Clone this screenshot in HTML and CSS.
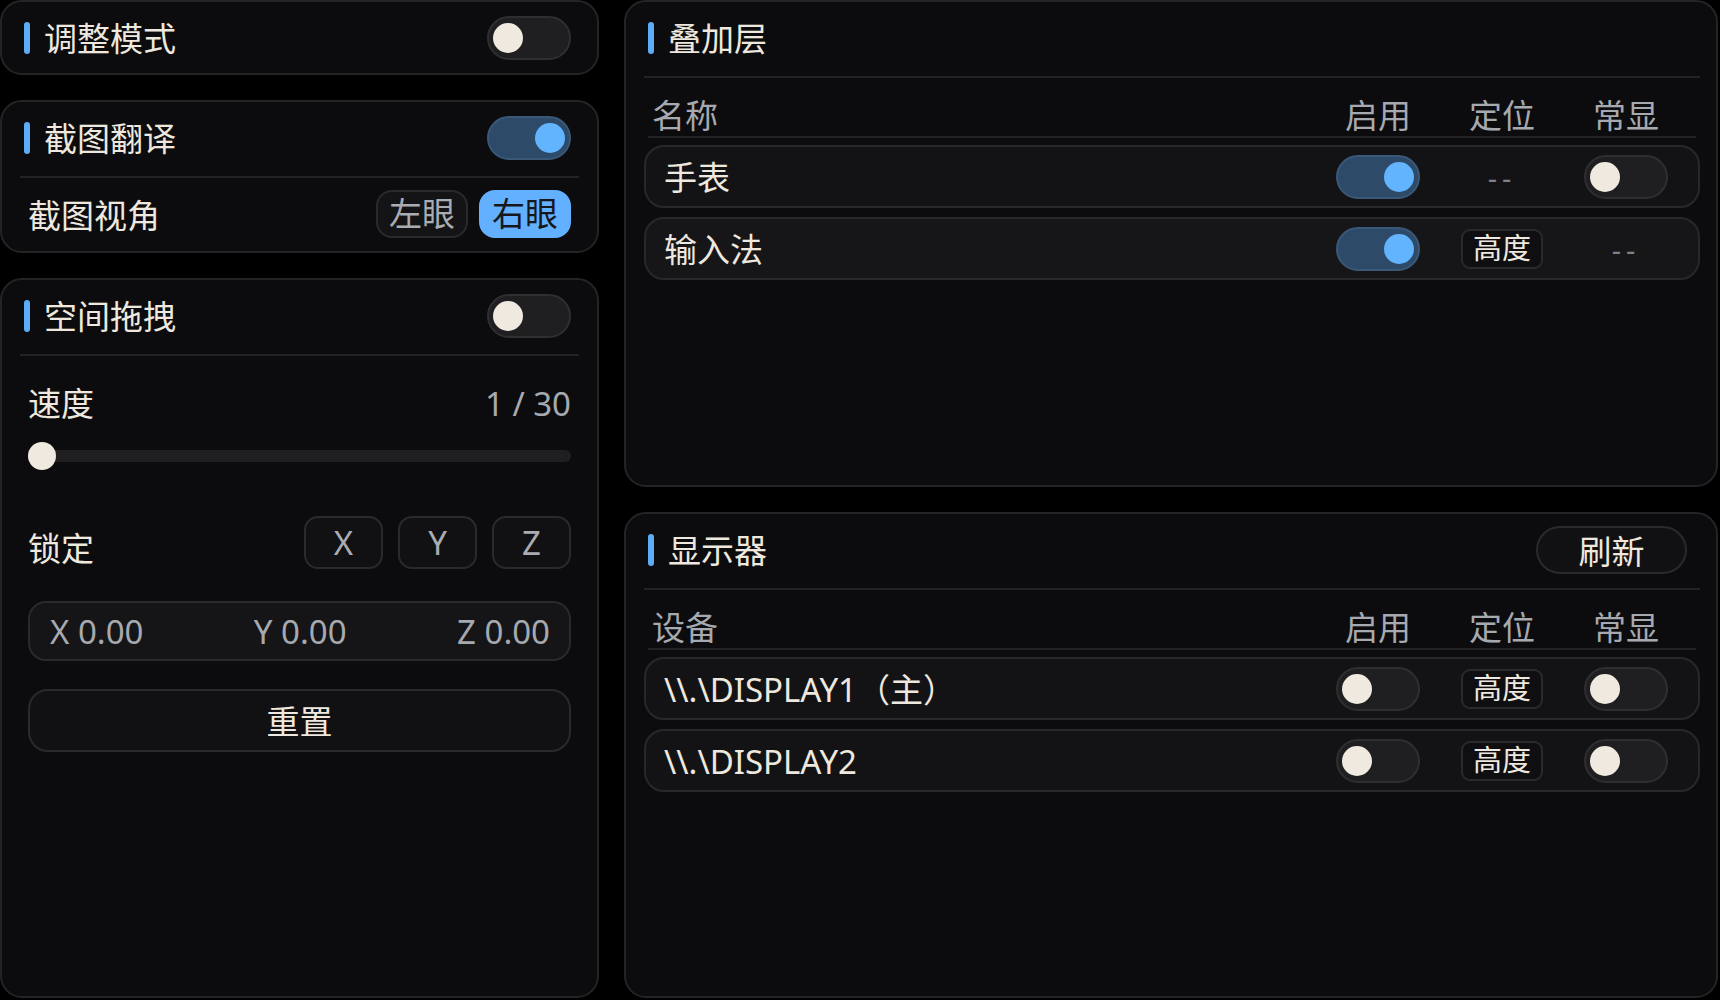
FILE: index.html
```html
<!DOCTYPE html>
<html lang="zh-CN">
<head>
    <meta charset="UTF-8">
    <meta name="viewport" content="width=device-width, initial-scale=1.0">
    <title>设置</title>
    <link rel="stylesheet" href="styles.css">
</head>
<body>
    <div class="app">
        <div class="column-left">
            <section class="card card-compact">
                <div class="card-head">
                    <span class="card-title">调整模式</span>
                    <span class="switch"><span class="knob"></span></span>
                </div>
            </section>

            <section class="card">
                <div class="card-head">
                    <span class="card-title">截图翻译</span>
                    <span class="switch on"><span class="knob"></span></span>
                </div>
                <div class="divider"></div>
                <div class="row view-row">
                    <span>截图视角</span>
                    <div class="seg">
                        <button class="seg-btn">左眼</button>
                        <button class="seg-btn active">右眼</button>
                    </div>
                </div>
            </section>

            <section class="card card-fill">
                <div class="card-head">
                    <span class="card-title">空间拖拽</span>
                    <span class="switch"><span class="knob"></span></span>
                </div>
                <div class="divider"></div>
                <div class="row speed-row">
                    <span>速度</span>
                    <span class="muted">1 / 30</span>
                </div>
                <div class="slider">
                    <div class="slider-track"><span class="slider-thumb"></span></div>
                </div>
                <div class="row lock-row">
                    <span class="lock-label">锁定</span>
                    <div class="axis-group">
                        <button class="axis-btn">X</button>
                        <button class="axis-btn">Y</button>
                        <button class="axis-btn">Z</button>
                    </div>
                </div>
                <div class="coords">
                    <span>X 0.00</span>
                    <span>Y 0.00</span>
                    <span>Z 0.00</span>
                </div>
                <button class="reset-btn">重置</button>
            </section>
        </div>

        <div class="column-right">
            <section class="card card-wide">
                <div class="card-head">
                    <span class="card-title">叠加层</span>
                </div>
                <div class="divider"></div>
                <div class="table-head">
                    <span>名称</span>
                    <span class="cell">启用</span>
                    <span class="cell">定位</span>
                    <span class="cell">常显</span>
                </div>
                <div class="table-rows">
                    <div class="table-row">
                        <span>手表</span>
                        <span class="cell"><span class="switch on"><span class="knob"></span></span></span>
                        <span class="cell"><span class="dash">--</span></span>
                        <span class="cell"><span class="switch"><span class="knob"></span></span></span>
                    </div>
                    <div class="table-row hover">
                        <span>输入法</span>
                        <span class="cell"><span class="switch on"><span class="knob"></span></span></span>
                        <span class="cell"><button class="pos-btn">高度</button></span>
                        <span class="cell"><span class="dash">--</span></span>
                    </div>
                </div>
            </section>

            <section class="card card-wide">
                <div class="card-head">
                    <span class="card-title">显示器</span>
                    <button class="refresh-btn">刷新</button>
                </div>
                <div class="divider"></div>
                <div class="table-head">
                    <span>设备</span>
                    <span class="cell">启用</span>
                    <span class="cell">定位</span>
                    <span class="cell">常显</span>
                </div>
                <div class="table-rows">
                    <div class="table-row">
                        <span>\\.\DISPLAY1（主）</span>
                        <span class="cell"><span class="switch"><span class="knob"></span></span></span>
                        <span class="cell"><button class="pos-btn">高度</button></span>
                        <span class="cell"><span class="switch"><span class="knob"></span></span></span>
                    </div>
                    <div class="table-row">
                        <span>\\.\DISPLAY2</span>
                        <span class="cell"><span class="switch"><span class="knob"></span></span></span>
                        <span class="cell"><button class="pos-btn">高度</button></span>
                        <span class="cell"><span class="switch"><span class="knob"></span></span></span>
                    </div>
                </div>
            </section>
        </div>
    </div>
</body>
</html>
```

FILE: styles.css
```css
* {
    box-sizing: border-box;
}
html, body {
    margin: 0;
    height: 100%;
    background: #000;
}
body {
    font-family: "Noto Sans", "Noto Sans CJK SC", sans-serif;
    font-size: 33px;
    line-height: 1.2;
    color: #eee8df;
}
button {
    font: inherit;
    color: inherit;
    cursor: pointer;
}
.app {
    display: grid;
    grid-template-columns: 599px 1094px;
    gap: 25px;
    height: 998px;
}
.column-left {
    display: flex;
    flex-direction: column;
    gap: 25px;
    min-height: 0;
}
.column-right {
    display: grid;
    grid-template-rows: 487px 1fr;
    gap: 25px;
    min-height: 0;
}

/* cards */
.card {
    background: #0c0c0e;
    border: 2px solid #242427;
    border-radius: 22px;
    padding: 12px 20px 13px;
}
.card-compact {
    padding-bottom: 11px;
}
.card-fill {
    flex: 1;
}
.card-wide {
    padding: 12px 16px 16px 18px;
}
.card-head {
    display: flex;
    align-items: center;
    justify-content: space-between;
    min-height: 48px;
    padding: 0 6px 0 2px;
}
.card-wide .card-head {
    padding: 0 13px 0 4px;
}
.card-title {
    display: flex;
    align-items: center;
    gap: 14px;
    padding-top: 2px;
}
.card-title::before {
    content: "";
    width: 6px;
    height: 32px;
    margin-top: -2px;
    border-radius: 3px;
    background: #5cacf6;
}
.divider {
    height: 2px;
    margin: 14px -2px 0;
    background: #232326;
}
.card-wide .divider {
    margin: 14px 0 0;
}
.muted {
    color: #a6a9af;
}

/* switch */
.switch {
    display: flex;
    align-items: center;
    flex: none;
    width: 84px;
    height: 44px;
    padding: 0 4px;
    border-radius: 22px;
    background: #1f1f22;
    border: 2px solid #2f2f32;
}
.switch .knob {
    width: 30px;
    height: 30px;
    border-radius: 50%;
    background: #efe9e0;
}
.switch.on {
    justify-content: flex-end;
    background: #2d4b69;
    border-color: #3a5877;
}
.switch.on .knob {
    background: #62b4ff;
}

/* left column rows */
.row {
    display: flex;
    align-items: center;
    justify-content: space-between;
    padding: 0 6px;
}
.view-row {
    margin-top: 12px;
    height: 48px;
}
.view-row > span {
    padding-top: 3px;
}
.seg {
    display: flex;
    gap: 11px;
}
.seg-btn {
    display: flex;
    align-items: center;
    justify-content: center;
    width: 92px;
    height: 48px;
    padding: 0;
    border-radius: 16px;
    border: 2px solid #2a2a2d;
    background: #141416;
    color: #a9acb2;
}
.seg-btn.active {
    background: #62b0ff;
    border-color: #62b0ff;
    color: #15171a;
}
.speed-row {
    margin-top: 28px;
    height: 40px;
}
.slider {
    display: flex;
    align-items: center;
    height: 28px;
    margin: 18px 6px 0;
}
.slider-track {
    display: flex;
    align-items: center;
    width: 100%;
    height: 12px;
    border-radius: 6px;
    background: #1f1f22;
}
.slider-thumb {
    flex: none;
    width: 28px;
    height: 28px;
    border-radius: 50%;
    background: #efe9e0;
}
.lock-row {
    margin-top: 46px;
    align-items: flex-end;
}
.lock-label {
    line-height: 40px;
}
.axis-group {
    display: flex;
    gap: 15px;
}
.axis-btn {
    display: flex;
    align-items: center;
    justify-content: center;
    width: 79px;
    height: 53px;
    padding: 0;
    border-radius: 14px;
    border: 2px solid #2a2a2d;
    background: #111113;
    color: #a9acb2;
}
.coords {
    display: flex;
    align-items: center;
    justify-content: space-between;
    height: 60px;
    margin: 32px 6px 0;
    padding: 2px 19px 0 20px;
    border-radius: 18px;
    border: 2px solid #2a2a2d;
    background: #151517;
    color: #a6a9af;
}
.reset-btn {
    display: block;
    width: calc(100% - 12px);
    height: 63px;
    margin: 28px 6px 0;
    padding-top: 4px;
    border-radius: 20px;
    border: 2px solid #2a2a2d;
    background: #111113;
}

/* tables */
.refresh-btn {
    width: 151px;
    height: 48px;
    padding: 3px 0 0;
    border-radius: 24px;
    border: 2px solid #2a2a2d;
    background: #111113;
}
.table-head {
    display: grid;
    grid-template-columns: 1fr 124px 124px 124px;
    align-items: end;
    height: 60px;
    margin: 0 4px;
    padding: 0 8px 0 4px;
    border-bottom: 2px solid #232326;
    color: #a6a9af;
}
.cell {
    display: flex;
    justify-content: center;
}
.table-rows {
    display: flex;
    flex-direction: column;
    gap: 9px;
    margin-top: 7px;
}
.table-row {
    display: grid;
    grid-template-columns: 1fr 124px 124px 124px;
    align-items: center;
    height: 63px;
    padding: 0 10px 0 18px;
    border-radius: 20px;
    border: 2px solid #28282b;
    background: #131316;
}
.table-row > span:first-child {
    padding-top: 3px;
}
.table-row.hover {
    background: #161619;
}
.pos-btn {
    display: flex;
    align-items: center;
    justify-content: center;
    width: 82px;
    height: 40px;
    padding: 0;
    border-radius: 9px;
    border: 2px solid #2a2a2d;
    background: #0f0f11;
    font-size: 29px;
}
.dash {
    padding-top: 4px;
    color: #7d8086;
    font-size: 29px;
    letter-spacing: 5px;
}
```
